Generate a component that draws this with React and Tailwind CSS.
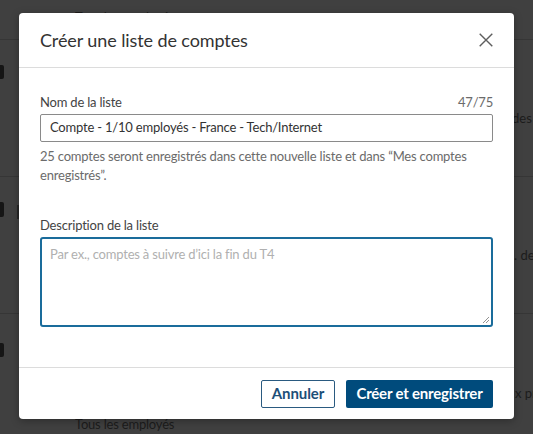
import React from "react";

const font = { fontFamily: 'Lato, "Open Sans", Arial, sans-serif' };

export default function App() {
  return (
    <div
      className="relative w-[533px] h-[434px] overflow-hidden bg-[#404040] text-[#1c1c1c]"
      style={font}
    >
      {/* dimmed page behind */}
      <div className="flex flex-col">
        <div className="h-[40px] border-b border-[#363636] pl-[75px] pt-[9px] text-[13px] leading-[16px] tracking-[-0.2px]">
          Tous les employés
        </div>
        <div className="h-[137px] border-b border-[#363636] flex flex-col">
          <div className="flex pt-[25px]">
            <div className="w-[4px] h-[14px] rounded-r-[2px] bg-[#151515]" />
          </div>
          <div className="pt-[30px] pl-[512px] whitespace-nowrap text-[13px] leading-[18px]">des r</div>
        </div>
        <div className="h-[137px] border-b border-[#363636] flex flex-col">
          <div className="flex items-start gap-[13px] pt-[25px]">
            <div className="w-[4px] h-[15px] rounded-r-[2px] bg-[#151515]" />
            <div className="mt-[3px] w-[3px] h-[14px] bg-[#262626]" />
          </div>
          <div className="pt-[27px] pl-[514px] whitespace-nowrap text-[13px] leading-[18px]">. des</div>
        </div>
        <div className="h-[120px] flex flex-col">
          <div className="flex pt-[29px]">
            <div className="w-[4px] h-[14px] rounded-r-[2px] bg-[#151515]" />
          </div>
          <div className="pt-[27px] pl-[515px] whitespace-nowrap text-[13px] leading-[18px]">x pr</div>
          <div className="pl-[75px] pt-[14px] text-[13px] leading-[16px] tracking-[-0.2px]">
            Tous les employés
          </div>
        </div>
      </div>

      {/* modal */}
      <div className="absolute left-[19px] top-[13px] w-[495px] h-[406px] rounded-[4px] bg-white flex flex-col shadow-[0_2px_8px_rgba(0,0,0,0.3)]">
        <div className="h-[55px] shrink-0 border-b border-[#dcdcdc] flex items-center justify-between px-[21px]">
          <h2 className="text-[18px] leading-[24px] font-normal text-[#333] tracking-[-0.1px] pb-[1px]">
            Créer une liste de comptes
          </h2>
          <svg width="14" height="14" viewBox="0 0 14 14">
            <path d="M0.7 0.7 L13.3 13.3 M13.3 0.7 L0.7 13.3" stroke="#5e5e5e" strokeWidth="1.4" fill="none" />
          </svg>
        </div>

        <div className="flex-1 flex flex-col px-[21px] pt-[25px] tracking-[-0.2px]">
          <div className="flex items-end justify-between text-[13px] leading-[19px] text-[#444]">
            <span>Nom de la liste</span>
            <span className="text-[#6b6b6b]">47/75</span>
          </div>
          <div className="mt-[2px] h-[28px] border border-[#8a8a8a] rounded-[2px] flex items-center px-[9px] text-[13px] text-[#333]">
            Compte - 1/10 employés - France - Tech/Internet
          </div>
          <p className="mt-[5px] text-[13px] leading-[19px] text-[#6b6b6b]">
            25 comptes seront enregistrés dans cette nouvelle liste et dans “Mes comptes enregistrés”.
          </p>
          <div className="mt-[31px] text-[13px] leading-[19px] text-[#444]">
            Description de la liste
          </div>
          <div className="mt-[2px] relative h-[90px] border-2 border-[#1a6c9b] rounded-[3px] px-[8px] pt-[6px] text-[13px] leading-[19px] text-[#b0b0b0]">
            Par ex., comptes à suivre d’ici la fin du T4
            <svg width="8" height="8" viewBox="0 0 8 8" className="absolute right-[1px] bottom-[1px]">
              <path d="M7 1 L1 7 M7 4 L4 7" stroke="#777" strokeWidth="0.8" fill="none" />
            </svg>
          </div>
        </div>

        <div className="h-[52px] shrink-0 border-t border-[#dcdcdc] flex items-center justify-end gap-[11px] px-[21px]">
          <button className="h-[28px] w-[74px] border border-[#2a5a80] rounded-[2px] text-[15px] font-bold text-[#1d4f78] bg-white tracking-[-0.1px]">
            Annuler
          </button>
          <button className="h-[28px] w-[147px] rounded-[2px] bg-[#004b7c] text-[15px] font-bold text-white tracking-[-0.2px]">
            Créer et enregistrer
          </button>
        </div>
      </div>
    </div>
  );
}
